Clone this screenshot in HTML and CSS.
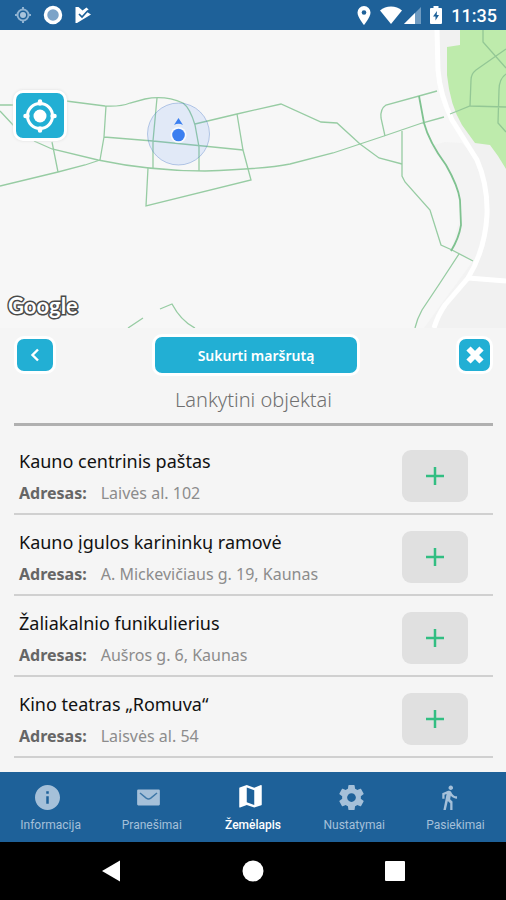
FILE: index.html
```html
<!DOCTYPE html>
<html lang="lt">
<head>
    <meta charset="UTF-8">
    <meta name="viewport" content="width=device-width, initial-scale=1.0">
    <title>Žemėlapis</title>
    <link rel="stylesheet" href="styles.css">
</head>
<body>

    <!-- Status bar -->
    <header class="status-bar">
        <div class="status-left">
            <svg width="18" height="18" viewBox="0 0 18 18" fill="none" stroke="#8fb3d2" stroke-width="2">
                <circle cx="9" cy="9" r="5.5"/>
                <circle cx="9" cy="9" r="3" fill="#a9c4dc" stroke="none"/>
                <path d="M9 1v3M9 14v3M1 9h3M14 9h3"/>
            </svg>
            <svg width="20" height="20" viewBox="0 0 20 20">
                <circle cx="10" cy="10" r="7.5" fill="#7ba3c8" stroke="#fff" stroke-width="3.5"/>
            </svg>
            <svg width="18" height="18" viewBox="0 0 18 18">
                <path d="M1.500 1h3l4 3.500 4-3 2 2-1.500 2.500 4 2.500L3 17H1.500z" fill="#fff"/>
                <path d="M5 8l3 3 6-6.500" fill="none" stroke="#1e6199" stroke-width="1.700"/>
            </svg>
        </div>
        <div class="status-right">
            <svg width="14" height="19" viewBox="0 0 14 19">
                <path d="M7 0a6.500 6.500 0 0 0-6.500 6.500C.5 11.300 7 19 7 19s6.500-7.700 6.500-12.500A6.500 6.500 0 0 0 7 0z" fill="#fff"/>
                <circle cx="7" cy="6.500" r="2.300" fill="#1e6199"/>
            </svg>
            <div class="signal">
                <svg width="22" height="18" viewBox="0 0 22 18">
                    <path d="M11 18L0 4.500C3 2 6.800.5 11 .5S19 2 22 4.500z" fill="#fff"/>
                </svg>
                <svg width="17" height="17" viewBox="0 0 17 17">
                    <path d="M17 0v17H0z" fill="#6f9bc1"/>
                    <path d="M11 6v11H0z" fill="#fff"/>
                </svg>
            </div>
            <svg width="12" height="18" viewBox="0 0 12 18">
                <path d="M3.500 0h5v2H11a1 1 0 0 1 1 1v14a1 1 0 0 1-1 1H1a1 1 0 0 1-1-1V3a1 1 0 0 1 1-1h2.500z" fill="#fff"/>
                <path d="M7 5L3 10.500h2.500v4L9 9H6.700z" fill="#1e6199"/>
            </svg>
            <span class="clock">11:35</span>
        </div>
    </header>

    <!-- Map -->
    <section class="map">
        <svg class="map-canvas" viewBox="0 30 506 298" preserveAspectRatio="xMidYMid slice">
            <path d="M437 30L438 70Q440 95 452 120L477 160Q488 185 487 215Q485 250 468 278L445 305L434 328H506V30z" fill="#f1f1f1"/>
            <path d="M430 146L445 142L462 143L477 160Q488 185 487 215Q485 250 468 278L445 305L434 328H424L473 261L451 251L461 215Q460 185 446 165z" fill="#f3f3f3"/>
            <path d="M460 30V45L447 47V75Q450 105 462 125L475 143L490 145L498 156L506 169V30z" fill="#beebac"/>
            <g class="road">
                <path d="M437 30L438 70Q440 95 452 120L477 160Q488 185 487 215Q485 250 468 278L445 305Q438 315 434 328"/>
                <path d="M468 278L506 281"/>
            </g>
            <g class="path">
                <path d="M0 105H14M66 101L105 106Q120 107 130 103L145 99Q165 95 183 103Q190 108 195 125L199 147V171"/>
                <path d="M106 106L104 137L100 160M104 137L153 141L243 150M157 98L153 141V169"/>
                <path d="M195 124L237 114L281 104L321 122L337 123L360 144L379 158L402 164"/>
                <path d="M237 114L243 150L251 180L146 206L148 168"/>
                <path d="M0 111L14 126M34 141L52 149L98 160Q150 171 205 171Q265 169 290 164L333 153L384 136L422 123L444 117M450 114L460 110"/>
                <path d="M52 142L58 172M0 186L58 172L85 165L100 160"/>
                <path d="M437 91L419 96L386 105Q380 109 381 118L385 136"/>
                <path d="M402 131V176L405 182L430 210L441 245L452 250L473 261"/>
                <path d="M459 254L440 283L422 310Q417 319 415 328"/>
                <path d="M128 328L143 318M160 309L172 304Q181 321 195 328"/>
            </g>
            <path class="path path-main" d="M419 96L424 123Q429 142 446 165Q458 186 460 200L461 225Q459 238 451 251"/>
            <path class="path path-park" d="M460 110L470 106L506 107M483 30V42L506 68M506 49L476 70Q471 74 471 80L470 106M506 74Q499 79 499 90L498 123L506 132"/>
            <circle cx="178.500" cy="134" r="31" fill="#4285f4" fill-opacity=".12" stroke="#4272c4" stroke-opacity=".35"/>
            <circle cx="178.500" cy="135" r="8" fill="#fff" fill-opacity=".75"/>
            <circle cx="178.500" cy="135" r="6.300" fill="#3b7ff0"/>
            <path d="M174 125L178.500 118L183 125Q178.500 122.500 174 125z" fill="#3b7ff0"/>
        </svg>
        <button class="blue-button locate-button" type="button" aria-label="Mano vieta">
            <svg width="34" height="34" viewBox="0 0 34 34">
                <g fill="none" stroke="#fff">
                    <circle cx="17" cy="17" r="12.500" stroke-width="3"/>
                    <path d="M17 2.500v2M17 29.500v2M2.500 17h2M29.500 17h2" stroke-width="4.500" stroke-linecap="round"/>
                </g>
                <circle cx="17" cy="17" r="6.500" fill="#fff"/>
            </svg>
        </button>
        <span class="map-logo">Google</span>
    </section>

    <!-- Places to visit -->
    <main class="panel">
        <div class="panel-actions">
            <button class="blue-button back-button" type="button" aria-label="Atgal">
                <svg width="10" height="14" viewBox="0 0 10 14"><path d="M8 1.500L2.500 7L8 12.500" fill="none" stroke="#fff" stroke-width="2.400"/></svg>
            </button>
            <button class="blue-button route-button" type="button">Sukurti maršrutą</button>
            <button class="blue-button close-button" type="button" aria-label="Uždaryti">
                <svg width="20" height="20" viewBox="0 0 20 20"><path d="M3.500 3.500L16.500 16.500M16.500 3.500L3.500 16.500" stroke="#fff" stroke-width="6"/></svg>
            </button>
        </div>
        <h1>Lankytini objektai</h1>
        <ul class="places">
            <li class="place">
                <div>
                    <h2>Kauno centrinis paštas</h2>
                    <p><b>Adresas:</b>Laivės al. 102</p>
                </div>
                <button class="add-button" type="button" aria-label="Pridėti"><svg width="18" height="18" viewBox="0 0 18 18"><path d="M9 0v18M0 9h18"/></svg></button>
            </li>
            <li class="place">
                <div>
                    <h2>Kauno įgulos karininkų ramovė</h2>
                    <p><b>Adresas:</b>A. Mickevičiaus g. 19, Kaunas</p>
                </div>
                <button class="add-button" type="button" aria-label="Pridėti"><svg width="18" height="18" viewBox="0 0 18 18"><path d="M9 0v18M0 9h18"/></svg></button>
            </li>
            <li class="place">
                <div>
                    <h2>Žaliakalnio funikulierius</h2>
                    <p><b>Adresas:</b>Aušros g. 6, Kaunas</p>
                </div>
                <button class="add-button" type="button" aria-label="Pridėti"><svg width="18" height="18" viewBox="0 0 18 18"><path d="M9 0v18M0 9h18"/></svg></button>
            </li>
            <li class="place">
                <div>
                    <h2>Kino teatras „Romuva“</h2>
                    <p><b>Adresas:</b>Laisvės al. 54</p>
                </div>
                <button class="add-button" type="button" aria-label="Pridėti"><svg width="18" height="18" viewBox="0 0 18 18"><path d="M9 0v18M0 9h18"/></svg></button>
            </li>
        </ul>
    </main>

    <!-- Tabs -->
    <nav class="tabs">
        <a class="tab" href="#informacija">
            <svg viewBox="2 2 20 20"><path d="M12 2C6.480 2 2 6.480 2 12s4.480 10 10 10 10-4.480 10-10S17.520 2 12 2zm1 15h-2v-6h2v6zm0-8h-2V7h2v2z"/></svg>
            Informacija
        </a>
        <a class="tab" href="#pranesimai">
            <svg viewBox="1 1 22 22"><path d="M3 5h18q1 0 1 1v12q0 1-1 1H3q-1 0-1-1V6q0-1 1-1z"/><path class="fold" d="M4.500 8L10 12.500q2 1.500 4 0L19.500 8"/></svg>
            Pranešimai
        </a>
        <a class="tab active" href="#zemelapis">
            <svg viewBox="2 3 20 20"><path d="M20.500 3l-.16.030L15 5.100 9 3 3.360 4.900c-.21.070-.36.250-.36.480V20.500c0 .28.220.5.500.5l.16-.030L9 18.900l6 2.100 5.640-1.900c.21-.070.36-.25.360-.48V3.500c0-.28-.22-.5-.5-.5zM15 19l-6-2.110V5l6 2.110V19z"/></svg>
            Žemėlapis
        </a>
        <a class="tab" href="#nustatymai">
            <svg viewBox="2 2 20 20"><path d="M19.430 12.980c.04-.32.070-.64.070-.98s-.030-.66-.070-.98l2.110-1.650c.19-.15.240-.42.120-.64l-2-3.460c-.12-.22-.39-.3-.61-.22l-2.490 1c-.52-.4-1.080-.73-1.690-.98l-.38-2.650C14.460 2.180 14.250 2 14 2h-4c-.25 0-.46.180-.49.420l-.38 2.650c-.61.250-1.170.59-1.690.98l-2.490-1c-.23-.09-.49 0-.61.220l-2 3.460c-.13.220-.07.490.12.640l2.110 1.650c-.04.320-.07.650-.07.980s.030.660.070.980l-2.110 1.650c-.19.150-.24.420-.12.640l2 3.460c.12.220.39.300.61.220l2.490-1c.52.400 1.080.730 1.690.980l.38 2.650c.030.240.240.420.490.420h4c.25 0 .46-.18.490-.42l.38-2.650c.61-.25 1.170-.59 1.690-.98l2.490 1c.23.090.49 0 .61-.22l2-3.460c.12-.22.070-.49-.12-.64l-2.110-1.650zM12 15.500c-1.930 0-3.500-1.570-3.500-3.500s1.570-3.500 3.500-3.500 3.500 1.570 3.500 3.500-1.570 3.500-3.500 3.500z"/></svg>
            Nustatymai
        </a>
        <a class="tab" href="#pasiekimai">
            <svg viewBox="4 1 22 22"><path d="M13.500 5.500c1.100 0 2-.9 2-2s-.9-2-2-2-2 .9-2 2 .9 2 2 2zM9.800 8.900L7 23h2.100l1.800-8 2.100 2v6h2v-7.500l-2.100-2 .6-3C14.800 12 16.800 13 19 13v-2c-1.900 0-3.500-1-4.300-2.400l-1-1.600c-.4-.6-1-1-1.700-1-.3 0-.5.1-.8.1L6 8.300V13h2V9.600l1.800-.7"/></svg>
            Pasiekimai
        </a>
    </nav>

    <!-- System navigation -->
    <footer class="system-nav">
        <button type="button" aria-label="Atgal"><svg width="22" height="22" viewBox="0 0 22 22"><path d="M20 0.500v21L2 11z"/></svg></button>
        <button type="button" aria-label="Pradžia"><svg width="22" height="22" viewBox="0 0 22 22"><circle cx="11" cy="11" r="10.500"/></svg></button>
        <button type="button" aria-label="Programos"><svg width="22" height="22" viewBox="0 0 22 22"><rect x="1" y="1" width="20" height="20" rx="1"/></svg></button>
    </footer>

</body>
</html>
```
FILE: styles.css
```css
* {
    box-sizing: border-box;
}

body {
    margin: 0;
    min-height: 100vh;
    display: flex;
    flex-direction: column;
    font-family: "Noto Sans", sans-serif;
    background-color: #f5f5f5;
}

button {
    display: flex;
    align-items: center;
    justify-content: center;
    padding: 0;
    border: none;
    cursor: pointer;
}

h1, h2, p, ul {
    margin: 0;
    padding: 0;
    font-weight: normal;
}

.status-bar {
    display: flex;
    align-items: center;
    justify-content: space-between;
    height: 30px;
    padding: 0 9px 0 14px;
    background-color: #1e6199;
}

.status-left {
    display: flex;
    align-items: center;
    gap: 11px;
}

.status-right {
    display: flex;
    align-items: center;
    gap: 9px;
}

.signal {
    display: flex;
    align-items: center;
    gap: 2px;
}

.clock {
    color: white;
    font-family: Roboto, sans-serif;
    font-size: 18px;
    font-weight: 500;
}

.map {
    position: relative;
    height: 298px;
    background-color: #f7f7f7;
}

.map-canvas {
    display: block;
    width: 100%;
    height: 100%;
}

.road {
    fill: none;
    stroke: white;
    stroke-width: 5;
}

.path {
    fill: none;
    stroke: #97cca3;
    stroke-width: 1.3;
}

.path-main {
    stroke: #7fc290;
    stroke-width: 1.8;
}

.path-park {
    stroke: #93c795;
}

.blue-button {
    height: 38px;
    background-color: #22afd4;
    border: 3px solid white;
    border-radius: 10px;
    color: white;
    font-family: inherit;
}

.locate-button {
    position: absolute;
    top: 60px;
    left: 13px;
    width: 54px;
    height: 51px;
    box-shadow: 0 0 3px #ddd;
}

.map-logo {
    position: absolute;
    left: 8px;
    bottom: 8px;
    color: white;
    font-family: Lato, sans-serif;
    font-size: 22px;
    font-weight: bold;
    line-height: 28px;
    -webkit-text-stroke: 3px #4a4a4a;
    paint-order: stroke fill;
}

.panel {
    flex: 1;
    padding: 6px 13px 13px 14px;
}

.panel-actions {
    display: flex;
    align-items: center;
    justify-content: space-between;
}

.back-button {
    width: 42px;
}

.route-button {
    width: 208px;
    height: 42px;
    font-size: 14px;
    font-weight: 600;
}

.close-button {
    width: 37px;
}

h1 {
    padding: 10px 0 9px;
    border-bottom: 3px solid #b0b0b0;
    color: #707070;
    font-size: 20px;
    font-weight: 300;
    line-height: 28px;
    text-align: center;
}

.places {
    padding-top: 8px;
    list-style: none;
}

.place {
    display: flex;
    justify-content: space-between;
    height: 81px;
    padding: 13px 25px 0 5px;
    border-bottom: 2px solid #d0d0d0;
}

.place h2 {
    color: #111;
    font-size: 18px;
    line-height: 28px;
}

.place p {
    padding-top: 4px;
    color: #8c8c8c;
    font-size: 16px;
    line-height: 28px;
}

.place b {
    margin-right: 14px;
    color: #666;
    font-weight: 700;
}

.add-button {
    width: 66px;
    height: 52px;
    margin-top: 3px;
    background-color: #e0e0e0;
    border-radius: 9px;
}

.add-button path {
    stroke: #32be82;
    stroke-width: 2.5;
}

.tabs {
    display: flex;
    height: 70px;
    background-color: #1e6199;
}

.tab {
    flex: 1;
    display: flex;
    flex-direction: column;
    align-items: center;
    gap: 7px;
    padding-top: 13px;
    color: #a5c0d9;
    font-family: Roboto, sans-serif;
    font-size: 12px;
    line-height: 16px;
    text-decoration: none;
}

.tab svg {
    width: 25px;
    height: 25px;
    margin-right: 6px;
    fill: currentColor;
}

.tab .fold {
    fill: none;
    stroke: #3f78a8;
    stroke-width: 1.3;
}

.tab.active {
    color: white;
    font-weight: 500;
}

.system-nav {
    display: flex;
    align-items: center;
    justify-content: center;
    gap: 100px;
    height: 58px;
    background-color: black;
}

.system-nav button {
    padding: 10px;
    background: none;
}

.system-nav svg {
    fill: white;
}
```
